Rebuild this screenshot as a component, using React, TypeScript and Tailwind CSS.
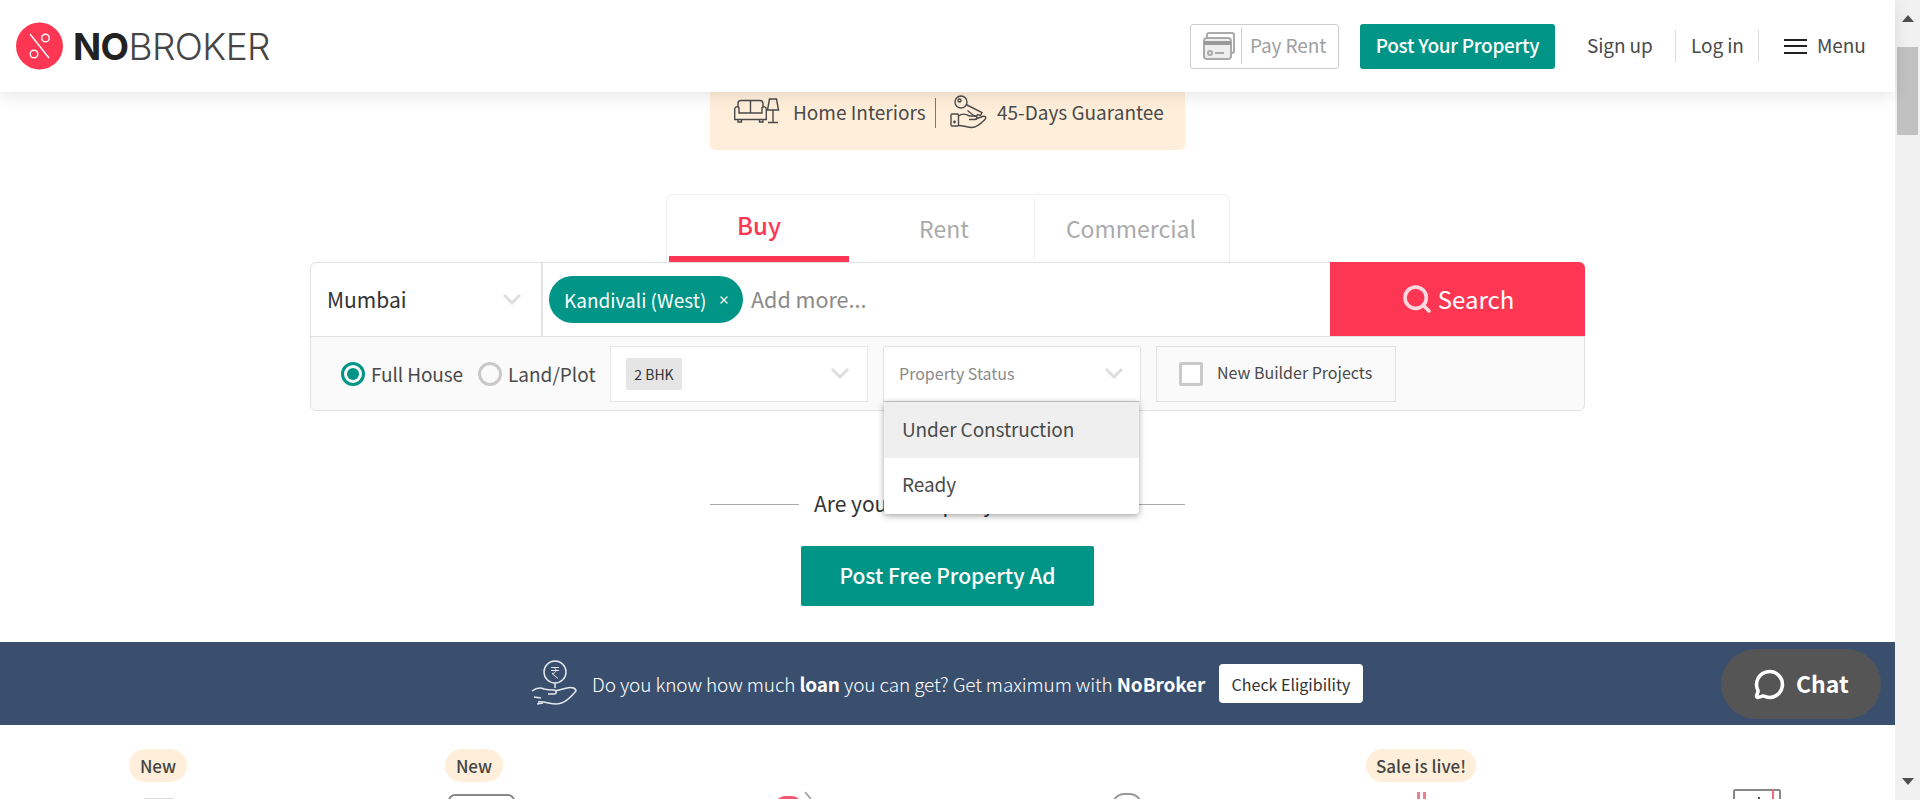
import { Search, X, MessageCircle } from "lucide-react";

const FONT = "font-['Noto_Sans_CJK_SC','Source_Sans_Pro',sans-serif]";

function Logo() {
  return (
    <div className="flex items-center">
      <svg width="47" height="48" viewBox="0 0 47 48" className="ml-[16px]">
        <circle cx="23.5" cy="24" r="23.5" fill="#fd3753" />
        <path d="M14 12 L33 36" stroke="#fff" strokeWidth="1.4" />
        <circle cx="29.5" cy="16" r="3.8" fill="none" stroke="#fff" strokeWidth="1.4" />
        <circle cx="18" cy="32" r="3.8" fill="none" stroke="#fff" strokeWidth="1.4" />
      </svg>
      <span className="ml-[10px] text-[37px] leading-none tracking-[-0.6px] text-[#464646] font-['Inter',sans-serif] font-light">
        <b className="font-bold text-[#222]">NO</b>BROKER
      </span>
    </div>
  );
}

function Chevron() {
  return (
    <svg width="20" height="13" viewBox="0 0 20 13" fill="none" stroke="#dedede" strokeWidth="3">
      <path d="M2 2l8 8 8-8" />
    </svg>
  );
}

function CardIcon() {
  return (
    <svg width="32" height="36" viewBox="0 0 32 36" fill="none" stroke="#aaa" strokeWidth="2">
      <rect x="4" y="5" width="27" height="20" rx="2" />
      <rect x="1" y="10" width="27" height="21" rx="3" fill="#eee" />
      <path d="M1 15h27" strokeWidth="4" stroke="#999" />
      <circle cx="7" cy="25" r="2" />
      <path d="M12 25h9" />
    </svg>
  );
}

function SofaIcon() {
  return (
    <svg width="47" height="27" viewBox="0 0 47 27" fill="none" stroke="#4a4a4a" strokeWidth="1.4">
      <path d="M4 9V5.500A3 3 0 0 1 7 2.500h19a3 3 0 0 1 3 3V9" />
      <path d="M16.500 2.500V15" />
      <path d="M5 9.500a2.500 2.500 0 0 0-4.300 1.500v10.500h31.600V11A2.500 2.500 0 0 0 28 9.500V15H5z" />
      <path d="M4 21.500V24h3.500v-2.500M25.500 21.500V24H29v-2.500" />
      <path d="M35.500 1h7l2 11h-11z" />
      <path d="M39 12v12.500M34 24.500h10" />
    </svg>
  );
}

function KeyHandIcon() {
  return (
    <svg width="37" height="34" viewBox="0 0 37 34" fill="none" stroke="#4a4a4a" strokeWidth="1.4">
      <circle cx="11" cy="7" r="6" />
      <circle cx="9.500" cy="5.500" r="1.500" />
      <path d="M16 9.500l16 8-1.500 3-3-1-1 2-3-1-6-5" />
      <rect x="1" y="19" width="7.500" height="12" rx="1" />
      <circle cx="4.500" cy="27" r=".7" />
      <path d="M8.500 21c4-3 7-2 11 0h5.500c2.500 0 2.500 3.500 0 3.500h-6" />
      <path d="M25.500 24l7-2.500c3-1 4 1 2.500 3-4 4-8 8-13 8-5 0-8-2-13.500-2" />
    </svg>
  );
}

function LoanIcon() {
  return (
    <svg width="46" height="47" viewBox="0 0 46 47" fill="none" stroke="#e3e7ec" strokeWidth="1.500">
      <circle cx="24" cy="12" r="11" />
      <path d="M20 7.500h8M20 10.500h8M22 7.500c4 0 4 6-1 6l6 5" strokeWidth="1" />
      <path d="M24 23v5" />
      <path d="M1 31c4-3 8-4 12-2 4 1 6 1 10 1 3 0 3 4 0 4h-6" />
      <path d="M24 31l12-3c5-1 9 0 9 3-6 7-12 13-20 13-6 0-12-3-18-2" />
      <path d="M3 37l7 1M6 44l6-1" />
    </svg>
  );
}

function Radio({ on }: { on?: boolean }) {
  return (
    <span
      className={
        "flex h-[24px] w-[24px] shrink-0 items-center justify-center rounded-full border-[3px] " +
        (on ? "border-[#009587]" : "border-[#c9c9c9]")
      }
    >
      {on && <span className="h-[12px] w-[12px] rounded-full bg-[#009587]" />}
    </span>
  );
}

function NavBar() {
  return (
    <header className="relative z-20 flex h-[92px] shrink-0 items-center justify-between bg-white shadow-[0_4px_16px_rgba(0,0,0,0.1)]">
      <Logo />
      <div className="flex items-center whitespace-nowrap text-[19px] leading-[28px] tracking-[-0.1px] text-[#4a4a4a]">
        <div className="flex h-[45px] w-[149px] items-center rounded-[3px] border border-[#ccc] pl-[12px]">
          <CardIcon />
          <span className="ml-[6px] h-[36px] border-l border-[#ccc]" />
          <span className="ml-[8px] pb-[2px] text-[#a0a0a0]">Pay Rent</span>
        </div>
        <button className="ml-[21px] h-[45px] w-[195px] rounded-[3px] bg-[#009587] pb-[2px] text-[19px] font-medium tracking-[-0.3px] text-white">
          Post Your Property
        </button>
        <span className="ml-[32px] w-[65px] pb-[2px]">Sign up</span>
        <span className="ml-[23px] h-[32px] border-l border-[#ddd]" />
        <span className="ml-[15px] w-[52px] pb-[2px]">Log in</span>
        <span className="ml-[15px] h-[32px] border-l border-[#ddd]" />
        <span className="ml-[25px] flex h-[15px] w-[23px] flex-col justify-between">
          <i className="block h-[2px] bg-[#222]" />
          <i className="block h-[2px] bg-[#222]" />
          <i className="block h-[2px] bg-[#222]" />
        </span>
        <span className="ml-[10px] mr-[30px] w-[48px] pb-[2px]">Menu</span>
      </div>
    </header>
  );
}

function SearchPanel() {
  return (
    <div className="ml-[310px] w-[1275px]">
      <div className="ml-[356px] flex h-[68px] w-[564px] rounded-t-[6px] border border-b-0 border-[#eee] bg-white">
        <div className="ml-[2px] flex w-[180px] flex-col items-center border-b-[6px] border-[#fd3753]">
          <span className="mt-[13px] text-[24px] font-medium leading-[34px] text-[#fd3753]">Buy</span>
        </div>
        <div className="flex w-[185px] justify-center pl-[5px]">
          <span className="mt-[16px] text-[23px] leading-[34px] text-[#aaa]">Rent</span>
        </div>
        <div className="my-[3px] flex flex-1 justify-center border-l border-[#eee] pr-[2px]">
          <span className="mt-[13px] text-[23px] leading-[34px] text-[#aaa]">Commercial</span>
        </div>
      </div>

      <div className="rounded-[6px] border border-[#e2e2e2] bg-[#fafafa]">
        <div className="flex h-[74px] rounded-t-[6px] border-b border-[#e2e2e2] bg-white">
          <div className="flex w-[232px] items-center justify-between border-r-2 border-[#e2e2e2] pl-[16px] pr-[19px]">
            <span className="-mt-[2px] text-[21px] leading-[30px] text-[#333]">Mumbai</span>
            <Chevron />
          </div>
          <div className="flex flex-1 items-center pl-[6px]">
            <div className="flex h-[47px] w-[194px] items-center rounded-full bg-[#009587] pl-[15px] text-[19px] leading-[26px] text-white">
              Kandivali (West)
              <X size={12} strokeWidth={2.5} className="ml-[12px]" />
            </div>
            <span className="-mt-[1px] ml-[8px] text-[21.500px] leading-[30px] text-[#8a8a8a]">Add more...</span>
          </div>
          <button className="-mr-px -mt-px flex h-[74px] w-[255px] items-center justify-center rounded-tr-[6px] bg-[#fd3753] text-[24px] leading-[36px] text-white">
            <Search size={32} strokeWidth={2.7} className="text-[#ffd9df]" />
            <span className="ml-[5px]">Search</span>
          </button>
        </div>

        <div className="flex h-[73px] items-center pl-[30px] text-[19px] leading-[28px] text-[#4a4a4a]">
          <Radio on />
          <span className="ml-[6px] w-[92px] whitespace-nowrap tracking-[-0.1px]">Full House</span>
          <span className="ml-[15px]"><Radio /></span>
          <span className="ml-[6px] w-[87px] whitespace-nowrap">Land/Plot</span>
          <div className="ml-[15px] flex h-[56px] w-[258px] items-center justify-between border border-[#e8e8e8] bg-white pl-[15px] pr-[17px]">
            <span className="flex h-[32px] w-[56px] items-center justify-center rounded-[2px] bg-[#e5e5e5] text-[14px] leading-[20px] text-[#333]">
              2 BHK
            </span>
            <Chevron />
          </div>
          <div className="relative ml-[15px] flex h-[56px] w-[258px] items-center justify-between rounded-t-[3px] border border-[#e2e2e2] bg-white pl-[15px] pr-[16px]">
            <span className="-mt-[1px] text-[16px] leading-[24px] text-[#8a8a8a]">Property Status</span>
            <Chevron />
            <ul className="absolute left-0 top-[54px] z-10 w-[255px] rounded-b-[3px] border-t border-[#bbb] bg-white text-[19px] leading-[28px] tracking-[-0.1px] text-[#4a4a4a] shadow-[0_2px_6px_rgba(0,0,0,0.35)]">
              <li className="flex h-[56px] items-center bg-[#efefef] pb-[2px] pl-[18px]">Under Construction</li>
              <li className="flex h-[56px] items-center pb-[4px] pl-[18px]">Ready</li>
            </ul>
          </div>
          <div className="ml-[15px] flex h-[56px] w-[240px] items-center border border-[#e2e2e2] pl-[22px]">
            <span className="h-[24px] w-[24px] rounded-[2px] border-[3px] border-[#c9c9c9] bg-white" />
            <span className="-mt-[4px] ml-[14px] text-[16px] leading-[24px] text-[#4a4a4a]">New Builder Projects</span>
          </div>
        </div>
      </div>
    </div>
  );
}

function Badge({ text, className }: { text: string; className: string }) {
  return (
    <span
      className={
        "flex h-[33px] items-center justify-center rounded-full bg-[#ffefda] text-[17px] font-medium leading-[24px] text-[#444] " +
        className
      }
    >
      {text}
    </span>
  );
}

function FeatureRow() {
  return (
    <div className="relative h-[74px] shrink-0 overflow-hidden bg-white">
      <Badge className="absolute left-[129px] top-[24px] w-[58px]" text="New" />
      <Badge className="absolute left-[445px] top-[24px] w-[58px]" text="New" />
      <Badge className="absolute left-[1366px] top-[24px] w-[110px]" text="Sale is live!" />
      {/* tops of the cut off service icons */}
      <span className="absolute left-[143px] top-[73px] h-[6px] w-[32px] rounded-t-[2px] border border-[#ddd]" />
      <span className="absolute left-[448px] top-[69px] h-[20px] w-[67px] rounded-t-[7px] border-2 border-[#888]" />
      <span className="absolute left-[775px] top-[71px] h-[20px] w-[27px] rounded-full bg-[#ef5a72]" />
      <span className="absolute left-[807px] top-[66px] h-[9px] w-[2px] -rotate-[40deg] bg-[#aaa]" />
      <span className="absolute left-[1112px] top-[68px] h-[24px] w-[30px] rounded-full border-2 border-[#999]" />
      <span className="absolute left-[1417px] top-[67px] h-[10px] w-[3px] bg-[#ee7f91]" />
      <span className="absolute left-[1423px] top-[67px] h-[10px] w-[3px] bg-[#ee7f91]" />
      <span className="absolute left-[1733px] top-[64px] h-[20px] w-[48px] rounded-t-[2px] border-2 border-[#888]" />
      <span className="absolute left-[1772px] top-[64px] h-[12px] w-[2px] bg-[#ee6a80]" />
      <span className="absolute left-[1758px] top-[72px] h-[2px] w-[2px] bg-[#555]" />
    </div>
  );
}

export default function App() {
  return (
    <div className={`flex h-[800px] w-[1920px] overflow-hidden bg-white ${FONT}`}>
      <main className="relative flex w-[1895px] flex-col">
        <NavBar />

        <div className="flex h-[58px] shrink-0 justify-center">
          <div className="-mt-[1px] flex h-[59px] w-[475px] items-start whitespace-nowrap rounded-b-[5px] bg-[#ffefda] pl-[24px] pt-[7px] text-[19px] leading-[28px] text-[#4a4a4a]">
            <SofaIcon />
            <span className="ml-[12px] w-[130px]">Home Interiors</span>
            <span className="ml-[12px] h-[30px] border-l border-[#777]" />
            <span className="-mt-[3px] ml-[14px]"><KeyHandIcon /></span>
            <span className="ml-[10px]">45-Days Guarantee</span>
          </div>
        </div>

        <div className="mt-[44px]">
          <SearchPanel />
        </div>

        <div className="mt-[80px] flex items-center whitespace-nowrap pl-[710px] text-[21px] leading-[28px] text-[#333]">
          <span className="w-[89px] border-t border-[#aaa]" />
          <span className="-mt-[2px] ml-[15px] w-[270px]">Are you a Property Owner?</span>
          <span className="ml-[1px] w-[100px] border-t border-[#aaa]" />
        </div>

        <button className="ml-[801px] mt-[29px] h-[60px] w-[293px] shrink-0 rounded-[2px] bg-[#009587] pb-[3px] text-[21px] font-medium leading-[30px] text-white">
          Post Free Property Ad
        </button>

        <div className="mt-[36px] flex h-[83px] shrink-0 items-center bg-[#3a4f6e] pl-[531px] text-[19px] font-light leading-[28px] tracking-[-0.12px] text-white">
          <LoanIcon />
          <span className="ml-[15px] w-[612px] whitespace-nowrap">
            Do you know how much <b className="font-bold">loan</b> you can get? Get maximum with <b className="font-bold">NoBroker</b>
          </span>
          <button className="ml-[15px] h-[39px] w-[144px] rounded-[4px] bg-white text-[16px] font-normal leading-[26px] tracking-normal text-[#333]">
            Check Eligibility
          </button>
        </div>

        <FeatureRow />

        <div className="absolute left-[1721px] top-[649px] z-30 flex h-[70px] w-[160px] items-center rounded-full bg-[#555] pl-[33px] text-[23px] font-bold leading-[32px] text-white">
          <MessageCircle size={31} strokeWidth={2.75} />
          <span className="-mt-[2px] ml-[11px]">Chat</span>
        </div>
      </main>

      {/* page scrollbar */}
      <div className="flex w-[25px] flex-col items-center justify-between bg-[#f1f1f1]">
        <div className="flex w-full flex-col items-center">
          <span className="mt-[15px] h-0 w-0 border-x-[6px] border-b-[7px] border-x-transparent border-b-[#505050]" />
          <span className="mt-[25px] h-[88px] w-[21px] bg-[#c1c1c1]" />
        </div>
        <span className="mb-[15px] h-0 w-0 border-x-[6px] border-t-[7px] border-x-transparent border-t-[#505050]" />
      </div>
    </div>
  );
}
